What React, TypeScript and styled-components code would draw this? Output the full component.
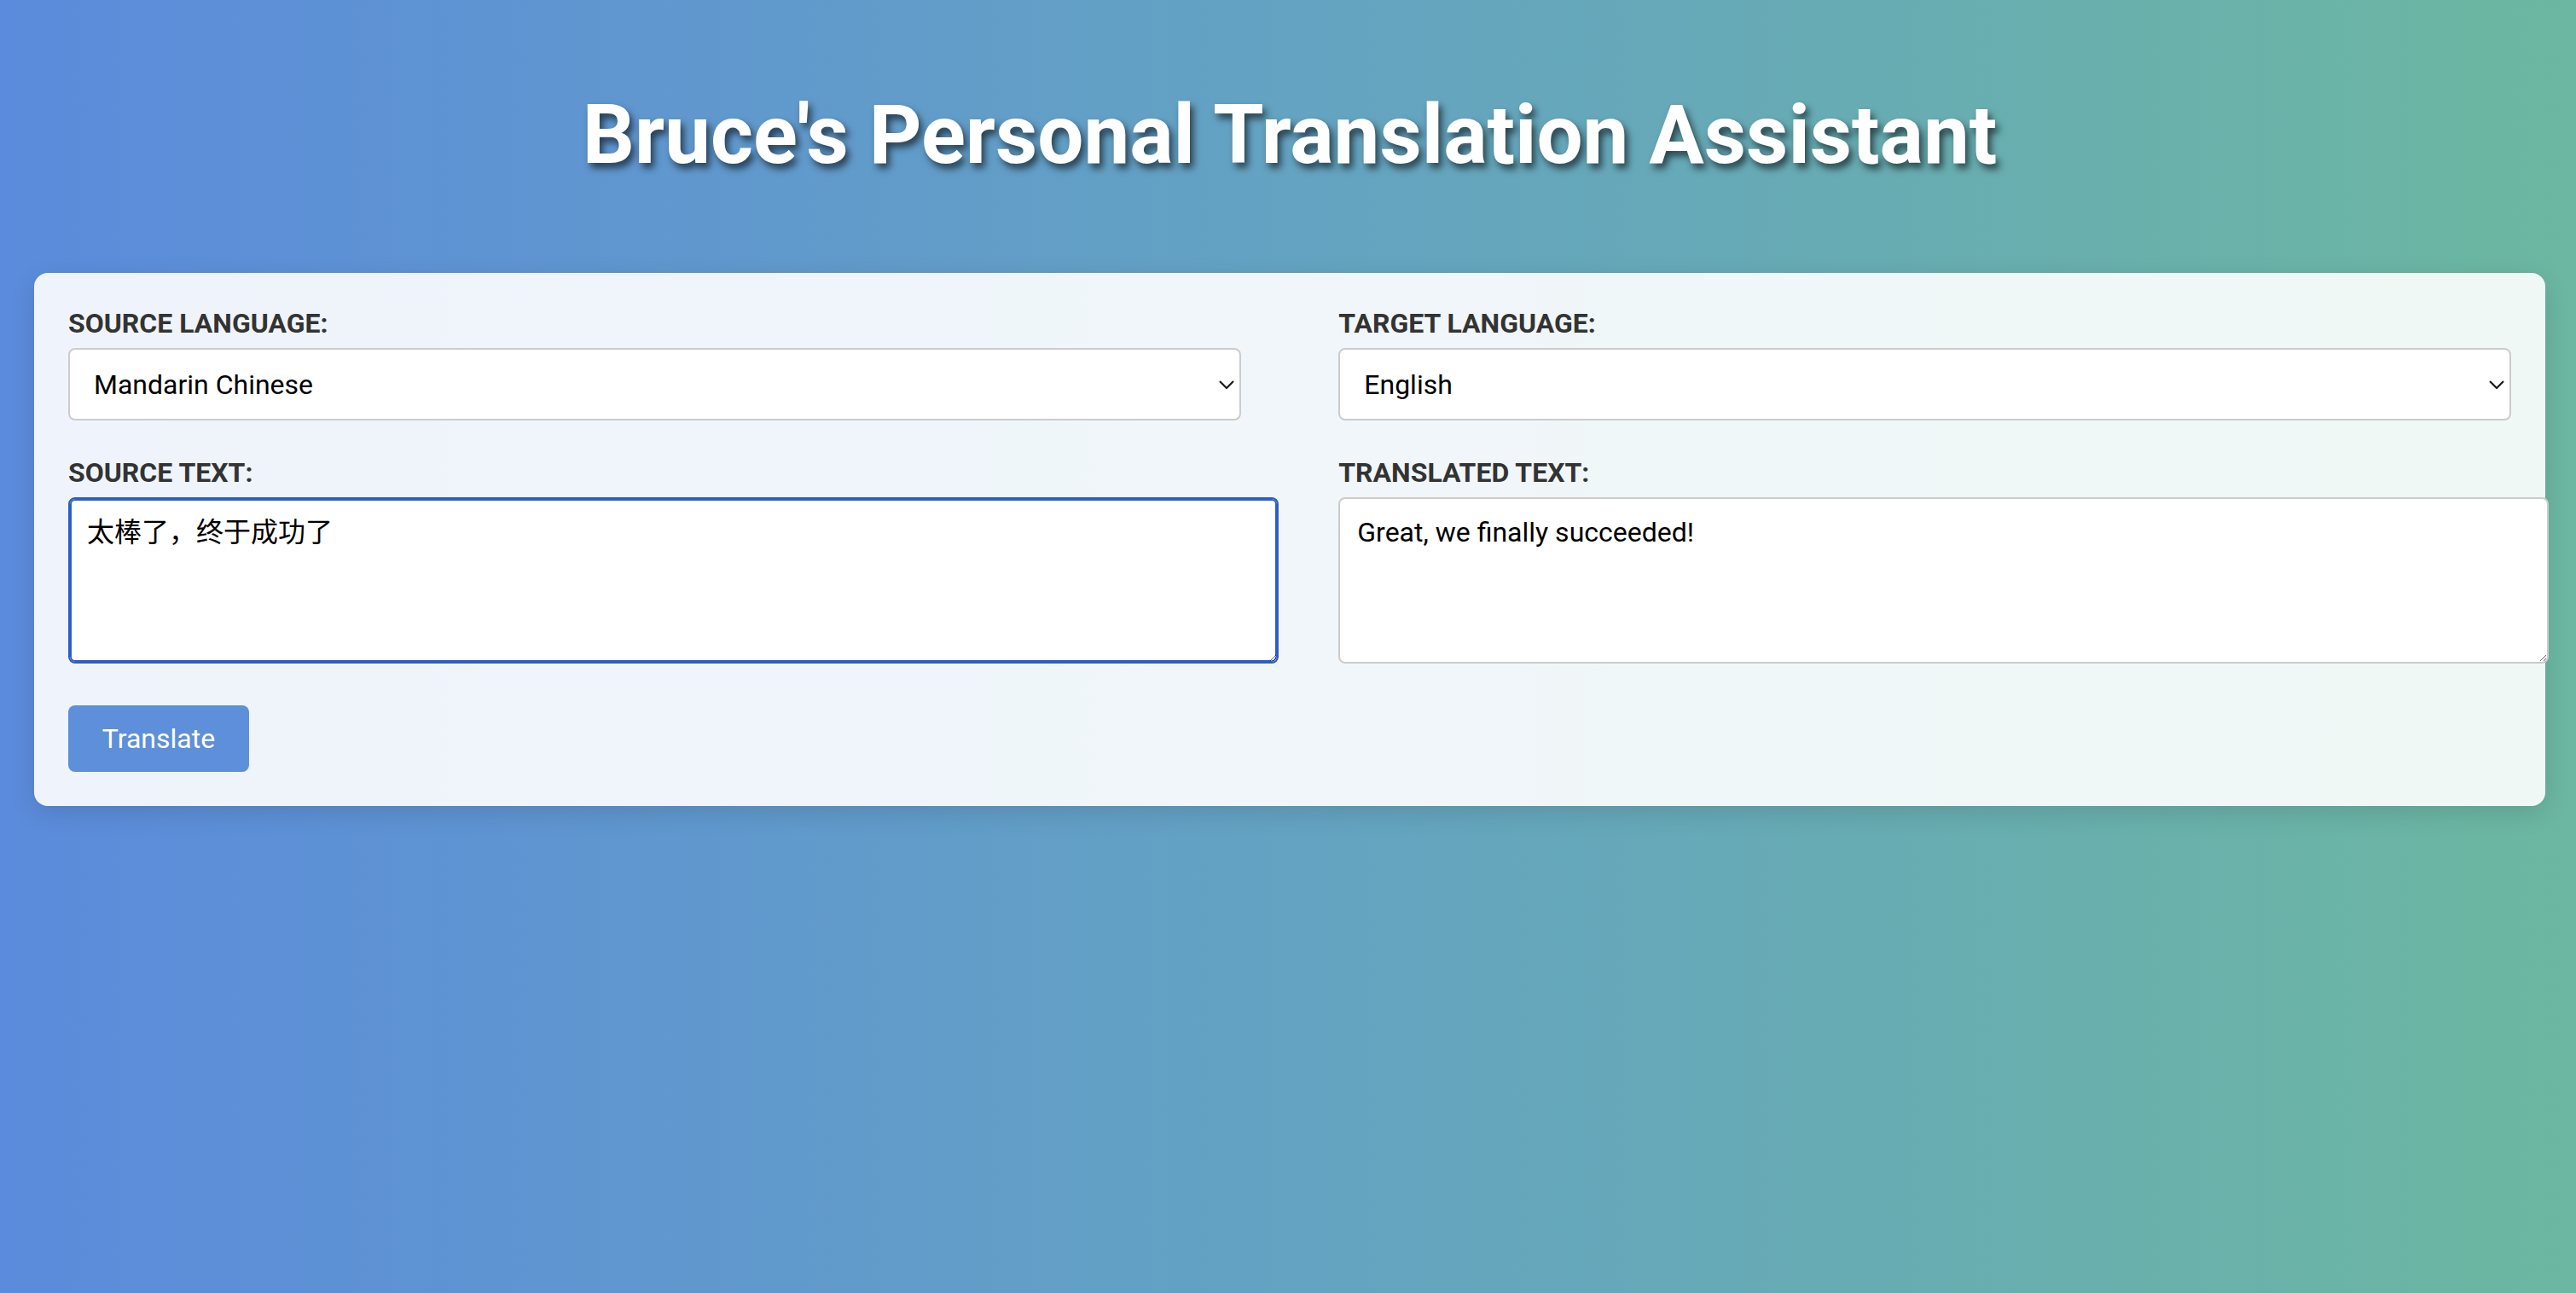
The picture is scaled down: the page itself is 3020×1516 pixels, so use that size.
import React from "react";
import styled, { createGlobalStyle } from "styled-components";

const GlobalStyle = createGlobalStyle`
  html, body {
    margin: 0;
    padding: 0;
  }
  body {
    font-family: Roboto, "Noto Sans", "Liberation Sans", sans-serif;
    background: linear-gradient(90deg, #5b8bdc 0%, #64a3c2 50%, #6cb7a1 100%);
    min-height: 1516px;
  }
  * {
    font-family: Roboto, "Noto Sans CJK SC", "Liberation Sans", sans-serif;
  }
`;

const Page = styled.div`
  min-height: 1516px;
  padding: 102px 36px 0 40px;
  box-sizing: border-box;
`;

const Title = styled.h1`
  margin: 0 0 106px 0;
  text-align: center;
  color: #ffffff;
  font-size: 96px;
  font-weight: 700;
  line-height: 112px;
  text-shadow: 4px 6px 8px rgba(0, 0, 0, 0.6);
`;

const Card = styled.div`
  width: 2944px;
  box-sizing: border-box;
  background: rgba(255, 255, 255, 0.9);
  border-radius: 16px;
  padding: 40px;
  box-shadow: 0 8px 30px rgba(0, 0, 0, 0.12);
`;

const Row = styled.div`
  display: flex;
  justify-content: space-between;
`;

const Column = styled.div`
  width: 48%;
`;

const Group = styled.div<{ $gap: number }>`
  margin-bottom: ${(p) => p.$gap}px;
`;

const Label = styled.label`
  display: block;
  color: #333333;
  font-size: 32px;
  font-weight: 700;
  line-height: 38px;
  margin-bottom: 10px;
`;

const SelectWrap = styled.div`
  position: relative;
`;

const Select = styled.select`
  appearance: none;
  -webkit-appearance: none;
  display: block;
  width: 100%;
  height: 85px;
  box-sizing: border-box;
  padding: 0 60px 0 28px;
  border: 2px solid #cccccc;
  border-radius: 8px;
  background: #ffffff;
  color: #000000;
  font-size: 32px;
  outline: none;
`;

const Chevron = styled.svg`
  position: absolute;
  right: 8px;
  top: 50%;
  width: 18px;
  height: 10px;
  margin-top: -5px;
  pointer-events: none;
`;

const TextArea = styled.textarea<{ $focused?: boolean }>`
  display: block;
  width: 100%;
  height: 151px;
  padding: 20px;
  border: 2px solid ${(p) => (p.$focused ? "#2a5ec8" : "#cccccc")};
  box-shadow: ${(p) => (p.$focused ? "inset 0 0 0 2px #2a5ec8, 0 0 0 1px #ffffff" : "none")};
  border-radius: 8px;
  background: #ffffff;
  color: #000000;
  font-size: 32px;
  line-height: 38px;
  resize: vertical;
  outline: none;
`;

const Button = styled.button`
  display: block;
  height: 78px;
  width: 212px;
  padding: 0;
  border: none;
  border-radius: 8px;
  background: #5e8fda;
  color: #ffffff;
  font-size: 32px;
  cursor: pointer;
`;

const ChevronIcon = () => (
  <Chevron viewBox="0 0 18 10">
    <path d="M1 1 L9 9 L17 1" fill="none" stroke="#1a1a1a" strokeWidth="2.2" />
  </Chevron>
);

export default function App() {
  return (
    <>
      <GlobalStyle />
      <Page>
        <Title>Bruce's Personal Translation Assistant</Title>
        <Card>
          <Row>
            <Column>
              <Group $gap={42}>
                <Label>SOURCE LANGUAGE:</Label>
                <SelectWrap>
                  <Select defaultValue="zh">
                    <option value="zh">Mandarin Chinese</option>
                    <option value="en">English</option>
                  </Select>
                  <ChevronIcon />
                </SelectWrap>
              </Group>
              <Group $gap={49}>
                <Label>SOURCE TEXT:</Label>
                <TextArea $focused defaultValue="太棒了，终于成功了" />
              </Group>
            </Column>
            <Column>
              <Group $gap={42}>
                <Label>TARGET LANGUAGE:</Label>
                <SelectWrap>
                  <Select defaultValue="en">
                    <option value="en">English</option>
                    <option value="zh">Mandarin Chinese</option>
                  </Select>
                  <ChevronIcon />
                </SelectWrap>
              </Group>
              <Group $gap={49}>
                <Label>TRANSLATED TEXT:</Label>
                <TextArea readOnly defaultValue="Great, we finally succeeded!" />
              </Group>
            </Column>
          </Row>
          <Button>Translate</Button>
        </Card>
      </Page>
    </>
  );
}
